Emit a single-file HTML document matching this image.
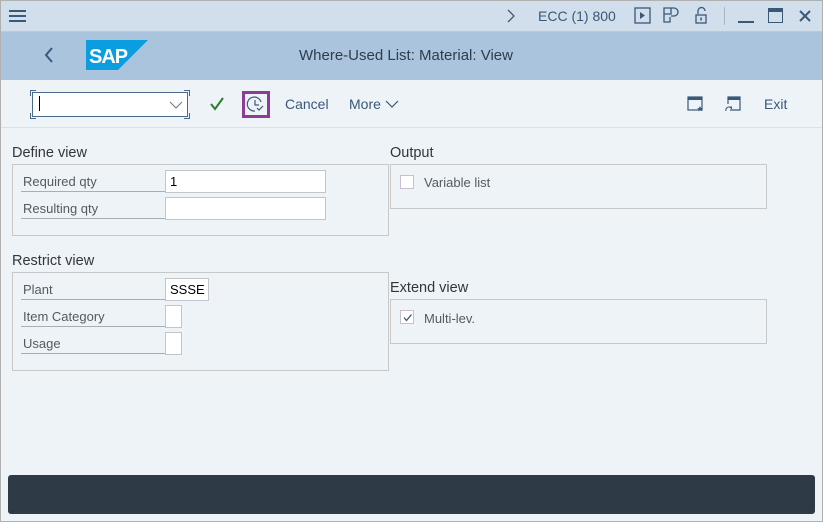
<!DOCTYPE html>
<html><head><style>
*{margin:0;padding:0;box-sizing:border-box}
body{width:823px;height:522px;background:#eef3f8;font-family:"Liberation Sans",sans-serif;position:relative;overflow:hidden;color:#32363a}
.a{position:absolute}
.frame{position:absolute;left:0;top:0;width:823px;height:522px;border:1px solid #b0b0b0;pointer-events:none}
.t{font-size:14px;white-space:nowrap}
.box{position:absolute;border:1px solid #c8c8c8}
.lbl{position:absolute;font-size:13px;color:#545a62;border-bottom:1px solid #a8aeb4;height:22px;padding-left:2px;line-height:24px}
.inp{position:absolute;background:#fff;border:1px solid #c2c6ca;height:23px;font-size:13px;padding-left:4px;line-height:22px;color:#000}
.cb{position:absolute;width:14px;height:14px;background:#fff;border:1px solid #c8c0d0}
</style></head><body>
<div class="a" style="left:0;top:0;width:823px;height:32px;background:#d1deeb;border-bottom:1px solid #c0c8d0"></div>
<div class="a" style="left:9px;top:10px;width:17px;height:2px;background:#3a5878;box-shadow:0 5px 0 #3a5878,0 10px 0 #3a5878"></div>
<svg class="a" style="left:506px;top:9px" width="10" height="14"><path d="M2 1l6 6-6 6" fill="none" stroke="#3a5878" stroke-width="1.3"/></svg>
<div class="a t" style="left:538px;top:8px;color:#3a5878">ECC (1) 800</div>
<svg class="a" style="left:634px;top:7px" width="20" height="18"><rect x="1" y="1" width="15" height="15" fill="none" stroke="#3a5878" stroke-width="1.3"/><path d="M6 5l5 3.5-5 3.5z" fill="#3a5878"/></svg>
<svg class="a" style="left:662px;top:6px" width="20" height="18"><path d="M2 2h7v6h-7zM2 8v8h6v-5M9 2h3a4 4 0 0 1 0 8h-3" fill="none" stroke="#3a5878" stroke-width="1.3"/></svg>
<svg class="a" style="left:694px;top:6px" width="16" height="20"><path d="M4 8V5a3.5 3.5 0 0 1 7 0" fill="none" stroke="#3a5878" stroke-width="1.3"/><rect x="2" y="9" width="10" height="8" fill="none" stroke="#3a5878" stroke-width="1.3"/><rect x="6.3" y="11.5" width="1.5" height="3" fill="#3a5878"/></svg>
<div class="a" style="left:724px;top:7px;width:1px;height:18px;background:#a8b4c0"></div>
<div class="a" style="left:738px;top:21px;width:16px;height:2px;background:#3a5878"></div>
<div class="a" style="left:768px;top:8px;width:15px;height:15px;border:1.5px solid #3a5878;border-top-width:4px"></div>
<svg class="a" style="left:798px;top:9px" width="14" height="14"><path d="M2 2l10 10M12 2L2 12" stroke="#3a5878" stroke-width="2"/></svg>

<div class="a" style="left:0;top:32px;width:823px;height:48px;background:#a9c4dc"></div>
<svg class="a" style="left:43px;top:46px" width="12" height="20"><path d="M9 2L3 9l6 7" fill="none" stroke="#3a5878" stroke-width="2"/></svg>
<svg class="a" style="left:86px;top:40px" width="62" height="30"><path d="M0 0H62L32 30H0z" fill="#0a9ee0"/><text x="3" y="23" font-family="Liberation Sans" font-weight="bold" font-size="20" fill="#fff" letter-spacing="-1">SAP</text></svg>
<div class="a" style="left:299px;top:47px;font-size:15px;color:#2f3c4a">Where-Used List: Material: View</div>

<div class="a" style="left:0;top:127px;width:823px;height:1px;background:#d8e0e8"></div>
<div class="a" style="left:32px;top:92px;width:156px;height:25px;background:#fff;border:1px solid #4a6a8c"></div>
<div class="a" style="left:30px;top:90px;width:6px;height:6px;border-left:1.5px solid #4a6a8c;border-top:1.5px solid #4a6a8c"></div>
<div class="a" style="left:184px;top:90px;width:6px;height:6px;border-right:1.5px solid #4a6a8c;border-top:1.5px solid #4a6a8c"></div>
<div class="a" style="left:30px;top:113px;width:6px;height:6px;border-left:1.5px solid #4a6a8c;border-bottom:1.5px solid #4a6a8c"></div>
<div class="a" style="left:184px;top:113px;width:6px;height:6px;border-right:1.5px solid #4a6a8c;border-bottom:1.5px solid #4a6a8c"></div>
<div class="a" style="left:39px;top:96px;width:1px;height:15px;background:#000"></div>
<svg class="a" style="left:169px;top:100px" width="14" height="10"><path d="M1 2l6 6 6-6" fill="none" stroke="#6a7a8a" stroke-width="1"/></svg>
<svg class="a" style="left:209px;top:96px" width="16" height="16"><path d="M2 8l4 5 8-11" fill="none" stroke="#2b7d2b" stroke-width="2"/></svg>
<div class="a" style="left:242px;top:91px;width:28px;height:27px;border:3px solid #8c3c96"></div>
<svg class="a" style="left:246px;top:95px" width="20" height="20"><path d="M15 7A7 7 0 1 0 9 16" fill="none" stroke="#3a5878" stroke-width="1.2"/><path d="M9 5v5h4M11 13l2 2 4-4" fill="none" stroke="#3a5878" stroke-width="1.2"/></svg>
<div class="a t" style="left:285px;top:96px;color:#3a5878">Cancel</div>
<div class="a t" style="left:349px;top:96px;color:#3a5878">More</div>
<svg class="a" style="left:385px;top:99px" width="14" height="10"><path d="M1 2l6 6 6-6" fill="none" stroke="#3a5878" stroke-width="1.2"/></svg>
<svg class="a" style="left:687px;top:96px" width="18" height="17"><rect x="1" y="1" width="14" height="13" fill="none" stroke="#3a5878" stroke-width="1.2"/><rect x="1" y="1" width="14" height="3" fill="#3a5878"/><path d="M13 10l1 2h2l-1.5 1.3.6 2-2-1.2-2 1.2.6-2L10 12h2z" fill="#3a5878"/></svg>
<svg class="a" style="left:725px;top:96px" width="18" height="17"><path d="M5 14h10V1H3v7" fill="none" stroke="#3a5878" stroke-width="1.2"/><rect x="3" y="1" width="12" height="3" fill="#3a5878"/><path d="M1 15a3 3 0 0 1 5-3M4 11h2.5v2" fill="none" stroke="#3a5878" stroke-width="1"/></svg>
<div class="a t" style="left:764px;top:96px;color:#3a5878">Exit</div>

<div class="a t" style="left:12px;top:145px;font-size:14.5px">Define view</div>
<div class="box" style="left:12px;top:164px;width:377px;height:72px"></div>
<div class="lbl" style="left:21px;top:170px;width:144px">Required qty</div>
<div class="inp" style="left:165px;top:170px;width:161px">1</div>
<div class="lbl" style="left:21px;top:197px;width:144px">Resulting qty</div>
<div class="inp" style="left:165px;top:197px;width:161px"></div>

<div class="a t" style="left:12px;top:253px;font-size:14.5px">Restrict view</div>
<div class="box" style="left:12px;top:272px;width:377px;height:99px"></div>
<div class="lbl" style="left:21px;top:278px;width:144px">Plant</div>
<div class="inp" style="left:165px;top:278px;width:44px">SSSE</div>
<div class="lbl" style="left:21px;top:305px;width:144px">Item Category</div>
<div class="inp" style="left:165px;top:305px;width:17px"></div>
<div class="lbl" style="left:21px;top:332px;width:144px">Usage</div>
<div class="inp" style="left:165px;top:332px;width:17px"></div>

<div class="a t" style="left:390px;top:145px;font-size:14.5px">Output</div>
<div class="box" style="left:390px;top:164px;width:377px;height:45px"></div>
<div class="cb" style="left:400px;top:175px"></div>
<div class="a" style="left:424px;top:175px;font-size:13px;color:#545a62">Variable list</div>

<div class="a t" style="left:390px;top:280px;font-size:14.5px">Extend view</div>
<div class="box" style="left:390px;top:299px;width:377px;height:45px"></div>
<div class="cb" style="left:400px;top:310px"></div>
<svg class="a" style="left:401px;top:311px" width="13" height="13"><path d="M3 6.5l2.5 3 5-6" fill="none" stroke="#3a5878" stroke-width="1.3"/></svg>
<div class="a" style="left:424px;top:311px;font-size:13px;color:#545a62">Multi-lev.</div>

<div class="a" style="left:8px;top:475px;width:807px;height:39px;background:#2f3a47;border-radius:3px"></div>
<div class="frame"></div>
</body></html>
